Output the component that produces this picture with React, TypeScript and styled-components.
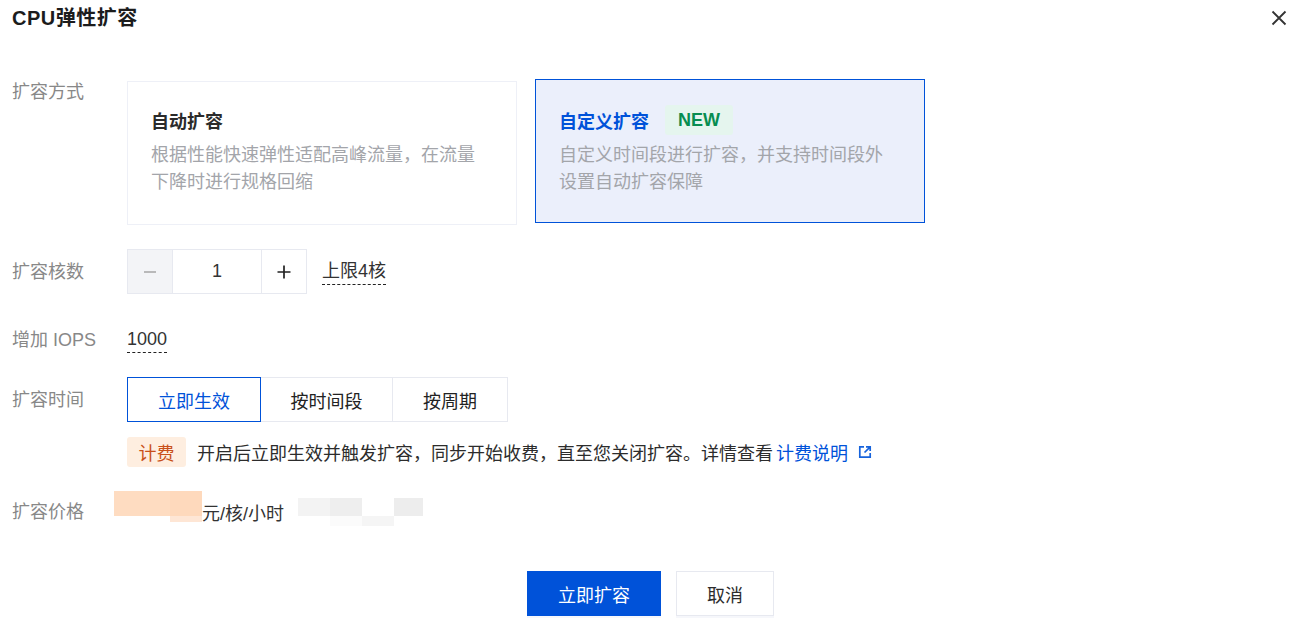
import React from "react";
import styled, { createGlobalStyle } from "styled-components";

const Global = createGlobalStyle`
  html, body { margin: 0; padding: 0; background: #fff; overflow: hidden; }
  * { box-sizing: border-box; }
  body { font-family: "Liberation Sans", "Noto Sans CJK SC", sans-serif; font-size: 18px; color: #222; }
`;

const Dialog = styled.div`
  width: 1298px;
  height: 634px;
  padding: 0 12px;
  display: flex;
  flex-direction: column;
`;
const Header = styled.div`
  height: 79px;
  padding-top: 4px;
  display: flex;
  justify-content: space-between;
  align-items: flex-start;
`;
const Title = styled.h1`
  margin: 0;
  font-size: 20px;
  line-height: 28px;
  font-weight: 700;
  letter-spacing: 0.5px;
  color: #1c1c1c;
`;
const Close = styled.button`
  border: 0;
  background: none;
  padding: 0;
  width: 16px;
  height: 16px;
  margin: 6px -1px 0 0;
  display: flex;
`;
const Row = styled.div<{ $h: number; $mt?: number; $top?: boolean }>`
  display: flex;
  align-items: ${(p) => (p.$top ? "flex-start" : "center")};
  min-height: ${(p) => p.$h}px;
  margin-top: ${(p) => p.$mt ?? 0}px;
`;
const Label = styled.div<{ $pt?: number }>`
  width: 115px;
  flex: none;
  color: #888;
  font-size: 18px;
  line-height: 24px;
  padding-top: ${(p) => p.$pt ?? 0}px;
`;
const Cards = styled.div`
  display: flex;
  align-items: flex-start;
  gap: 18px;
`;
const Card = styled.div<{ $active?: boolean }>`
  width: 390px;
  height: 144px;
  margin-top: ${(p) => (p.$active ? 0 : 2)}px;
  padding: ${(p) => (p.$active ? 27 : 25)}px 23px 0;
  border: 1px solid ${(p) => (p.$active ? "#0052d9" : "#eef0f7")};
  background: ${(p) => (p.$active ? "#ebeffb" : "#fff")};
`;
const CardTitle = styled.div<{ $active?: boolean }>`
  display: flex;
  align-items: center;
  height: 26px;
  font-size: 18px;
  font-weight: 700;
  color: ${(p) => (p.$active ? "#0052d9" : "#2b2b2b")};
`;
const NewBadge = styled.span`
  margin-left: 16px;
  width: 68px;
  height: 30px;
  border-radius: 3px;
  background: #e5f5ee;
  color: #078d50;
  font-weight: 700;
  font-size: 18px;
  display: flex;
  align-items: center;
  justify-content: center;
`;
const CardDesc = styled.div`
  margin-top: 9px;
  font-size: 18px;
  line-height: 27px;
  color: #a3a5aa;
  width: 340px;
`;
const Stepper = styled.div`
  display: flex;
  height: 45px;
  width: 180px;
  border: 1px solid #e7e9f0;
`;
const StepBtn = styled.div<{ $disabled?: boolean }>`
  width: 44px;
  flex: none;
  display: flex;
  align-items: center;
  justify-content: center;
  background: ${(p) => (p.$disabled ? "#f3f4f7" : "#fff")};
`;
const StepValue = styled.div`
  flex: 1;
  border-left: 1px solid #e7e9f0;
  border-right: 1px solid #e7e9f0;
  display: flex;
  align-items: center;
  justify-content: center;
  font-size: 18px;
  color: #333;
`;
const Dashed = styled.span<{ $ml?: number }>`
  margin-left: ${(p) => p.$ml ?? 0}px;
  line-height: 25px;
  font-size: 18px;
  color: #333;
  border-bottom: 1px dashed #222;
`;
const Tabs = styled.div`
  display: flex;
  height: 45px;
`;
const Tab = styled.div<{ $active?: boolean; $w: number }>`
  width: ${(p) => p.$w}px;
  margin-left: ${(p) => (p.$active ? 0 : -1)}px;
  display: flex;
  align-items: center;
  justify-content: center;
  font-size: 18px;
  color: ${(p) => (p.$active ? "#0052d9" : "#222")};
  border: 1px solid ${(p) => (p.$active ? "#0052d9" : "#e7e9f0")};
  position: relative;
  z-index: ${(p) => (p.$active ? 1 : 0)};
`;
const Note = styled.div`
  margin: 15px 0 0 115px;
  display: flex;
  align-items: center;
  height: 30px;
  font-size: 18px;
  color: #2c2c2c;
`;
const Tag = styled.span`
  width: 59px;
  height: 30px;
  border-radius: 3px;
  background: #feeee0;
  color: #c9501a;
  display: flex;
  align-items: center;
  justify-content: center;
  margin-right: 11px;
`;
const Link = styled.a`
  color: #0052d9;
  margin-left: 3px;
`;
const LinkIcon = styled.svg`
  margin-left: 10px;
  flex: none;
`;
const Mosaic = styled.svg<{ $ml?: number; $mb?: number }>`
  display: block;
  flex: none;
  margin-left: ${(p) => p.$ml ?? 0}px;
  margin-bottom: ${(p) => p.$mb ?? 0}px;
`;
const Price = styled.span`
  font-size: 18px;
  color: #333;
`;
const PriceContent = styled.div`
  display: flex;
  align-items: center;
  height: 40px;
  margin-left: -13px;
`;
const Footer = styled.div`
  margin-top: 39px;
  display: flex;
  justify-content: center;
  gap: 15px;
  padding-left: 3px;
`;
const Button = styled.button<{ $primary?: boolean }>`
  width: ${(p) => (p.$primary ? 134 : 98)}px;
  height: 45px;
  font: inherit;
  font-size: 18px;
  border: 1px solid ${(p) => (p.$primary ? "#0052d9" : "#e7e9f0")};
  background: ${(p) => (p.$primary ? "#0052d9" : "#fff")};
  color: ${(p) => (p.$primary ? "#fff" : "#2c2c2c")};
  box-shadow: 0 2px 0 #f6f7fb;
  padding: 0;
`;

export default function App() {
  return (
    <Dialog>
      <Global />
      <Header>
        <Title>CPU弹性扩容</Title>
        <Close aria-label="关闭">
          <svg width="16" height="16" viewBox="0 0 16 16" fill="none">
            <path d="M1.5 1.5 L14.5 14.5 M14.5 1.5 L1.5 14.5" stroke="#333" strokeWidth="1.8" />
          </svg>
        </Close>
      </Header>

      <Row $h={146} $top>
        <Label $pt={1}>扩容方式</Label>
        <Cards>
          <Card>
            <CardTitle>自动扩容</CardTitle>
            <CardDesc>根据性能快速弹性适配高峰流量，在流量下降时进行规格回缩</CardDesc>
          </Card>
          <Card $active>
            <CardTitle $active>
              自定义扩容
              <NewBadge>NEW</NewBadge>
            </CardTitle>
            <CardDesc>自定义时间段进行扩容，并支持时间段外设置自动扩容保障</CardDesc>
          </Card>
        </Cards>
      </Row>

      <Row $h={45} $mt={24}>
        <Label>扩容核数</Label>
        <Stepper>
          <StepBtn $disabled>
            <svg width="14" height="14" viewBox="0 0 14 14">
              <path d="M1 7 H13" stroke="#aaa" strokeWidth="1.6" />
            </svg>
          </StepBtn>
          <StepValue>1</StepValue>
          <StepBtn>
            <svg width="14" height="14" viewBox="0 0 14 14">
              <path d="M0.5 7 H13.5 M7 0.5 V13.5" stroke="#222" strokeWidth="1.7" />
            </svg>
          </StepBtn>
        </Stepper>
        <Dashed $ml={15}>上限4核</Dashed>
      </Row>

      <Row $h={26} $mt={33}>
        <Label>增加 IOPS</Label>
        <Dashed>1000</Dashed>
      </Row>

      <Row $h={45} $mt={24}>
        <Label>扩容时间</Label>
        <Tabs>
          <Tab $active $w={134}>立即生效</Tab>
          <Tab $w={133}>按时间段</Tab>
          <Tab $w={116}>按周期</Tab>
        </Tabs>
      </Row>

      <Note>
        <Tag>计费</Tag>
        开启后立即生效并触发扩容，同步开始收费，直至您关闭扩容。详情查看
        <Link>计费说明</Link>
        <LinkIcon width="14" height="14" viewBox="0 0 14 14" fill="none">
          <path d="M6 1.8 H1.8 V12.2 H12.2 V8" stroke="#1763dc" strokeWidth="1.7" />
          <path d="M8 1.8 H12.2 V6 M12.2 1.8 L6.5 7.5" stroke="#1763dc" strokeWidth="1.7" />
        </LinkIcon>
      </Note>

      <Row $h={40} $mt={25}>
        <Label>扩容价格</Label>
        <PriceContent>
          <Mosaic width="88" height="32" viewBox="0 0 88 32" $mb={10}>
            <rect x="0" y="0" width="56" height="25" fill="#fedcc1" />
            <rect x="56" y="0" width="32" height="25" fill="#fed9bc" />
            <rect x="56" y="25" width="32" height="6" fill="#fee6d5" />
          </Mosaic>
          <Price>元/核/小时</Price>
          <Mosaic width="125" height="28" viewBox="0 0 125 28" $ml={14}>
            <rect x="0" y="0" width="32" height="18" fill="#f3f3f3" />
            <rect x="32" y="0" width="32" height="18" fill="#eeeeee" />
            <rect x="32" y="18" width="32" height="10" fill="#fbfbfb" />
            <rect x="64" y="18" width="32" height="10" fill="#f5f5f5" />
            <rect x="96" y="0" width="29" height="18" fill="#ededed" />
          </Mosaic>
        </PriceContent>
      </Row>

      <Footer>
        <Button $primary>立即扩容</Button>
        <Button>取消</Button>
      </Footer>
    </Dialog>
  );
}
